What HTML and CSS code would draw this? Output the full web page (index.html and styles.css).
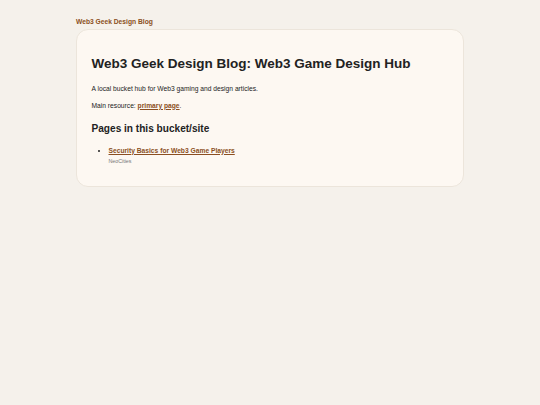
FILE: index.html
```html
<!DOCTYPE html>
<html lang="en">
<head>
<meta charset="utf-8">
<title>Web3 Geek Design Blog: Web3 Game Design Hub</title>
<link rel="stylesheet" href="styles.css">
</head>
<body>
<div class="wrap">
  <header class="site-header"><a class="brand" href="#">Web3 Geek Design Blog</a></header>
  <main class="card">
    <h1>Web3 Geek Design Blog: Web3 Game Design Hub</h1>
    <p>A local bucket hub for Web3 gaming and design articles.</p>
    <p>Main resource: <a href="#">primary page</a>.</p>
    <h2>Pages in this bucket/site</h2>
    <ul class="pages">
      <li><a href="#">Security Basics for Web3 Game Players</a><div class="meta">NeoCities</div></li>
    </ul>
  </main>
</div>
</body>
</html>
```
FILE: styles.css
```css
html, body {
  margin: 0;
  padding: 0;
  background: #f5f1eb;
  font-family: "Liberation Sans", Arial, sans-serif;
  color: #222;
}
.wrap {
  width: 388px;
  margin: 0 auto;
  padding-top: 16.5px;
}
.site-header {
  font-size: 6.7px;
  font-weight: bold;
  line-height: 9px;
  margin-bottom: 3.5px;
}
.brand {
  color: #8b4f22;
  text-decoration: none;
}
.card {
  display: block;
  background: #fdf8f2;
  border: 1px solid #ece5db;
  border-radius: 12px;
  padding: 26px 14.5px 21px;
}
h1 {
  font-size: 13.5px;
  line-height: 16px;
  margin: 0 0 11.5px;
  color: #222;
}
p {
  font-size: 6.7px;
  line-height: 9px;
  margin: 0 0 8px;
}
a {
  color: #8b4f22;
  font-weight: bold;
}
h2 {
  font-size: 10.1px;
  line-height: 13px;
  margin: 12px 0 11px;
}
.pages {
  margin: 0;
  padding-left: 17px;
  font-size: 6.7px;
  line-height: 9px;
}
.meta {
  font-size: 5.3px;
  line-height: 7px;
  color: #777;
  margin-top: 3px;
}
```
